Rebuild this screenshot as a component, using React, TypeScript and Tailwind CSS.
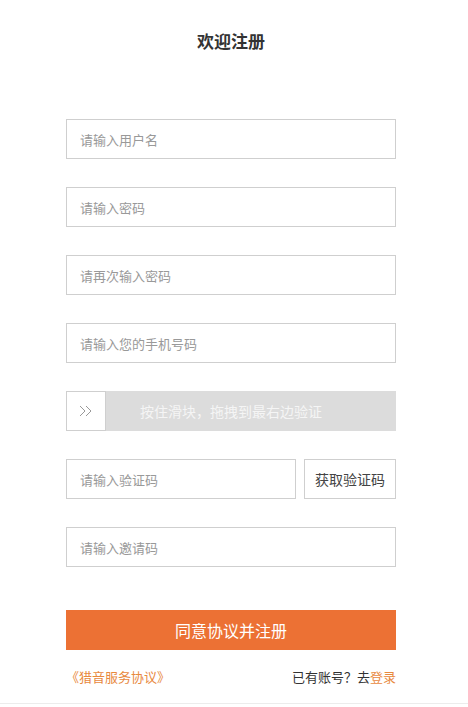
import React from 'react';

const font = { fontFamily: '"Noto Sans CJK SC", "Noto Sans", sans-serif' };

function Field({ placeholder }: { placeholder: string }) {
    return (
        <input
            placeholder={placeholder}
            className="w-full h-[40px] border border-[#cfcfcf] px-[13px] text-[13px] text-[#333] placeholder:text-[#999] outline-none bg-white"
        />
    );
}

export default function App() {
    return (
        <div className="w-[468px] h-[707px] bg-white relative" style={font}>
            <div className="w-[330px] ml-[66px] flex flex-col">
                <h1 className="mt-[28px] text-center text-[17px] font-bold text-[#333] leading-[26px]">欢迎注册</h1>

                <div className="mt-[65px] flex flex-col gap-[28px]">
                    <Field placeholder="请输入用户名" />
                    <Field placeholder="请输入密码" />
                    <Field placeholder="请再次输入密码" />
                    <Field placeholder="请输入您的手机号码" />

                    {/* slider */}
                    <div className="relative h-[40px] bg-[#dcdcdc] flex items-center justify-center">
                        <div className="absolute left-0 top-0 w-[40px] h-[40px] bg-white border border-[#cfcfcf] flex items-center justify-center">
                            <svg width="14" height="12" viewBox="0 0 14 12" fill="none" stroke="#999" strokeWidth="1">
                                <path d="M1 1l5 5-5 5M7 1l5 5-5 5" />
                            </svg>
                        </div>
                        <span className="text-[14px] text-[#f5f5f5]">按住滑块，拖拽到最右边验证</span>
                    </div>

                    <div className="flex gap-[8px]">
                        <div className="w-[230px]">
                            <Field placeholder="请输入验证码" />
                        </div>
                        <button className="flex-1 h-[40px] border border-[#cfcfcf] text-[14px] text-[#444] bg-white">获取验证码</button>
                    </div>

                    <Field placeholder="请输入邀请码" />
                </div>

                <button className="w-full h-[40px] mt-[43px] bg-[#ec7134] text-white text-[16px]">同意协议并注册</button>

                <div className="mt-[17px] flex justify-between text-[13px] leading-[20px]">
                    <span className="text-[#e8893e]">《猎音服务协议》</span>
                    <span className="text-[#333]">已有账号？去<span className="text-[#e8893e]">登录</span></span>
                </div>
            </div>

            <div className="absolute left-0 right-0 bottom-[3px] h-px bg-[#ececec]" />
        </div>
    );
}
